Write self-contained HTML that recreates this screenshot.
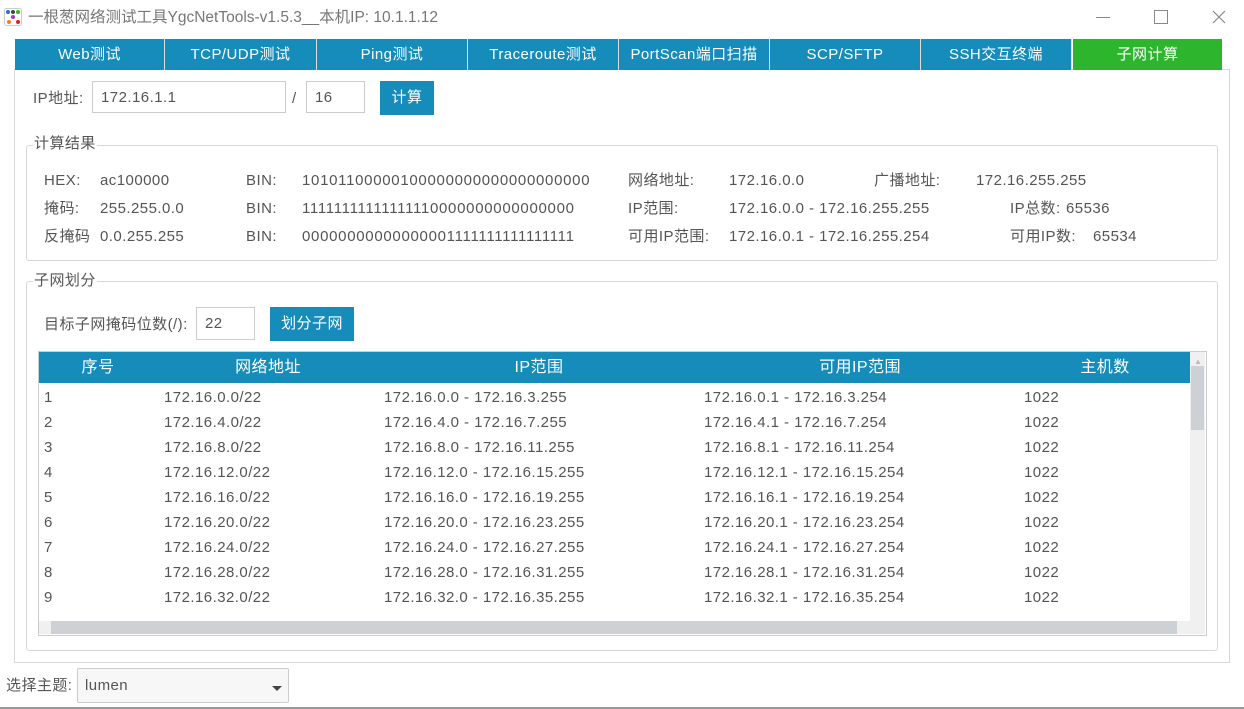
<!DOCTYPE html>
<html><head><meta charset="utf-8"><style>
body{margin:0;width:1244px;height:709px;background:#fff;position:relative;overflow:hidden;font-family:"Liberation Sans","Noto Sans CJK SC",sans-serif;font-size:15px;color:#555;letter-spacing:0.45px}
.a{position:absolute;white-space:nowrap;line-height:18px}
.bin{letter-spacing:0.7px}
.tab{position:absolute;top:39px;height:31px;background:#158cba;color:#fff;text-align:center;line-height:31px;font-size:15px;border-right:1px solid #ddd;box-sizing:border-box}
.box{position:absolute;border:1px solid #d8d8d8;border-radius:3px}
.lg{position:absolute;background:#fff;padding:0 1px;color:#555}
.inp{position:absolute;border:1px solid #ccc;background:#fff;height:32px;line-height:32px;padding-left:8px;box-sizing:border-box}
.btn{position:absolute;background:#158cba;color:#fff;text-align:center;line-height:34px;height:34px}
.th{position:absolute;top:352px;color:#fff;text-align:center;width:200px;line-height:31px;font-size:16px}
</style></head><body>
<svg class="a" style="left:4px;top:8px" width="18" height="18"><rect x="0.5" y="0.5" width="17" height="17" rx="2" fill="#fff" stroke="#ccc"/><circle cx="4" cy="4" r="2" fill="#2a6fd6"/><circle cx="9" cy="4" r="2" fill="#444"/><circle cx="14" cy="4" r="2" fill="#3cb521"/><circle cx="9" cy="9" r="2" fill="#9b3fb5"/><circle cx="5" cy="14" r="2" fill="#f47c20"/><circle cx="14" cy="14" r="2" fill="#e0202a"/></svg>
<div class="a" style="left:28px;top:9px;font-size:15.5px;color:#777;letter-spacing:0">一根葱网络测试工具YgcNetTools-v1.5.3__本机IP: 10.1.1.12</div>
<div class="a" style="left:1096px;top:17px;width:14px;height:1px;background:#888"></div>
<div class="a" style="left:1154px;top:10px;width:12px;height:12px;border:1px solid #888"></div>
<svg class="a" style="left:1212px;top:10px" width="14" height="14"><path d="M1 1L13 13M13 1L1 13" stroke="#888" stroke-width="1.2"/></svg>
<div class="box" style="left:14px;top:69px;width:1214px;height:592px;border-radius:0"></div>
<div class="tab" style="left:15px;width:150px">Web测试</div>
<div class="tab" style="left:165px;width:152px">TCP/UDP测试</div>
<div class="tab" style="left:317px;width:151px">Ping测试</div>
<div class="tab" style="left:468px;width:151px">Traceroute测试</div>
<div class="tab" style="left:619px;width:151px">PortScan端口扫描</div>
<div class="tab" style="left:770px;width:151px">SCP/SFTP</div>
<div class="tab" style="left:921px;width:151px">SSH交互终端</div>
<div class="tab" style="left:1073px;width:149px;background:#2db52e;border:none">子网计算</div>
<div class="a" style="left:33px;top:90px">IP地址:</div>
<div class="inp" style="left:92px;top:81px;width:194px">172.16.1.1</div>
<div class="a" style="left:292px;top:90px">/</div>
<div class="inp" style="left:306px;top:81px;width:59px">16</div>
<div class="btn" style="left:380px;top:81px;width:54px">计算</div>
<div class="box" style="left:26px;top:145px;width:1190px;height:114px"></div>
<div class="lg" style="left:33px;top:135px;line-height:18px">计算结果</div>
<div class="a" style="left:44px;top:172px">HEX:</div><div class="a" style="left:100px;top:172px">ac100000</div>
<div class="a" style="left:246px;top:172px">BIN:</div><div class="a bin" style="left:302px;top:172px">10101100000100000000000000000000</div>
<div class="a" style="left:628px;top:172px">网络地址:</div><div class="a" style="left:729px;top:172px">172.16.0.0</div>
<div class="a" style="left:874px;top:172px">广播地址:</div><div class="a" style="left:976px;top:172px">172.16.255.255</div>
<div class="a" style="left:44px;top:200px">掩码:</div><div class="a" style="left:100px;top:200px">255.255.0.0</div>
<div class="a" style="left:246px;top:200px">BIN:</div><div class="a bin" style="left:302px;top:200px">11111111111111110000000000000000</div>
<div class="a" style="left:628px;top:200px">IP范围:</div><div class="a" style="left:729px;top:200px">172.16.0.0 - 172.16.255.255</div>
<div class="a" style="left:1010px;top:200px">IP总数:</div><div class="a" style="left:1066px;top:200px">65536</div>
<div class="a" style="left:44px;top:228px">反掩码</div><div class="a" style="left:100px;top:228px">0.0.255.255</div>
<div class="a" style="left:246px;top:228px">BIN:</div><div class="a bin" style="left:302px;top:228px">00000000000000001111111111111111</div>
<div class="a" style="left:628px;top:228px">可用IP范围:</div><div class="a" style="left:729px;top:228px">172.16.0.1 - 172.16.255.254</div>
<div class="a" style="left:1010px;top:228px">可用IP数:</div><div class="a" style="left:1093px;top:228px">65534</div>
<div class="box" style="left:26px;top:281px;width:1190px;height:368px"></div>
<div class="lg" style="left:33px;top:272px;line-height:18px">子网划分</div>
<div class="a" style="left:44px;top:316px">目标子网掩码位数(/):</div>
<div class="inp" style="left:196px;top:307px;width:59px;height:33px">22</div>
<div class="btn" style="left:270px;top:307px;width:84px">划分子网</div>
<div class="box" style="left:38px;top:351px;width:1167px;height:283px;border-color:#ccc;border-radius:0"></div>
<div class="a" style="left:39px;top:352px;width:1151px;height:31px;background:#158cba"></div>
<div class="th" style="left:-2px">序号</div>
<div class="th" style="left:168px">网络地址</div>
<div class="th" style="left:439px">IP范围</div>
<div class="th" style="left:760px">可用IP范围</div>
<div class="th" style="left:1005px">主机数</div>
<div class="a" style="left:1190px;top:352px;width:15px;height:269px;background:#f0f0f0"></div>
<div class="a" style="left:1191px;top:366px;width:13px;height:64px;background:#cdd1d6"></div>
<div class="a" style="left:1194px;top:353px;font-size:8px;color:#bbb">▲</div>
<div class="a" style="left:39px;top:621px;width:1166px;height:13px;background:#f0f0f0"></div>
<div class="a" style="left:51px;top:621px;width:1126px;height:13px;background:#cdd1d6"></div>
<div id="rows"></div>
<script>
var h='';for(var i=0;i<9;i++){var b=i*4,y=389+i*25;
h+='<div class="a" style="left:44px;top:'+y+'px">'+(i+1)+'</div>'+
'<div class="a" style="left:164px;top:'+y+'px">172.16.'+b+'.0/22</div>'+
'<div class="a" style="left:384px;top:'+y+'px">172.16.'+b+'.0 - 172.16.'+(b+3)+'.255</div>'+
'<div class="a" style="left:704px;top:'+y+'px">172.16.'+b+'.1 - 172.16.'+(b+3)+'.254</div>'+
'<div class="a" style="left:1024px;top:'+y+'px">1022</div>';}
document.getElementById('rows').innerHTML=h;
</script>
<div class="a" style="left:6px;top:677px">选择主题:</div>
<div class="a" style="left:77px;top:668px;width:210px;height:33px;border:1px solid #ccc;border-radius:2px;background:#f7f7f7"></div>
<div class="a" style="left:85px;top:677px">lumen</div>
<div class="a" style="left:272px;top:686px;width:0;height:0;border-left:5px solid transparent;border-right:5px solid transparent;border-top:5px solid #444"></div>
<div class="a" style="left:0;top:707px;width:1244px;height:2px;background:#999"></div>
</body></html>
